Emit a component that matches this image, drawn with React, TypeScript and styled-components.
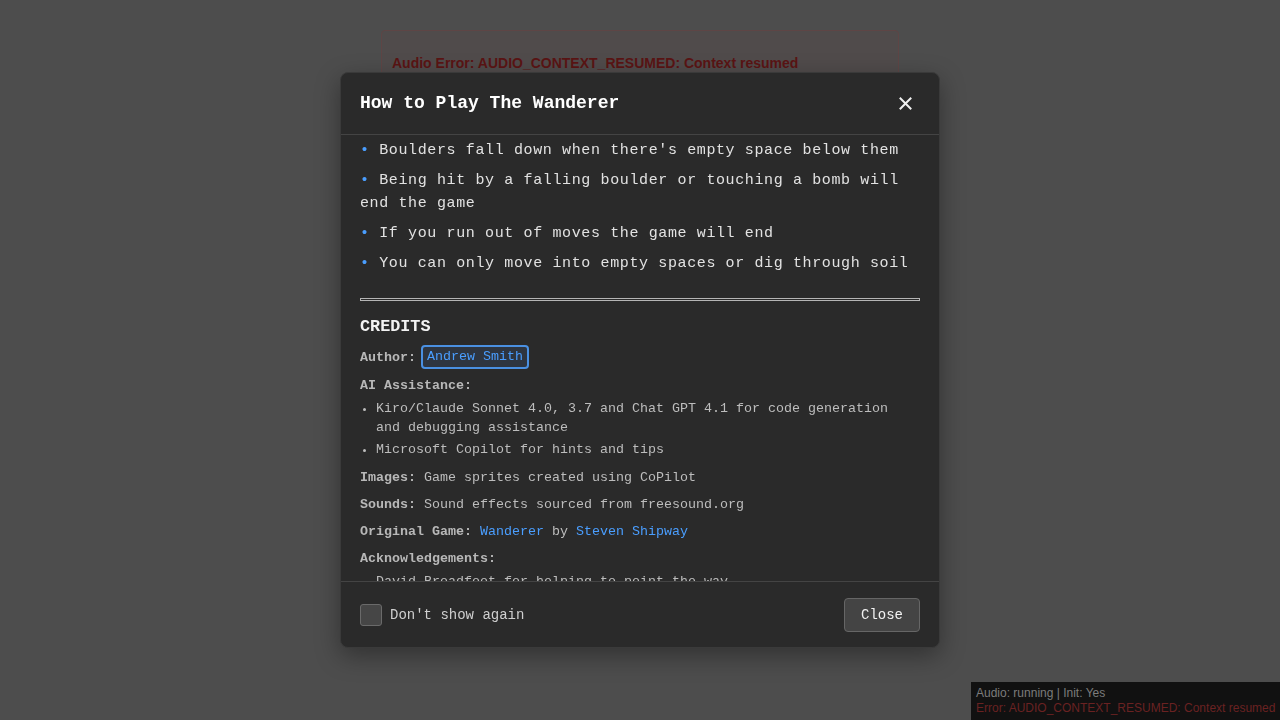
import React from "react";
import styled, { createGlobalStyle } from "styled-components";

const Global = createGlobalStyle`
  html, body { margin: 0; padding: 0; }
  body {
    background: #4d4d4d;
    font-family: "Liberation Sans", Arial, sans-serif;
    width: 1280px;
    height: 720px;
    overflow: hidden;
  }
`;

const Page = styled.div`
  display: flex;
  flex-direction: column;
  align-items: center;
  padding-top: 30px;
`;

const ErrorBox = styled.div`
  width: 518px;
  height: 90px;
  box-sizing: border-box;
  background: #504b4b;
  border: 1px solid #5e4545;
  border-radius: 4px;
  padding: 23px 10px 10px;
  color: #5a1414;
  font-weight: bold;
  font-size: 14px;
  line-height: 18px;
`;

const Overlay = styled.div`
  position: fixed;
  inset: 0;
  display: flex;
  align-items: center;
  justify-content: center;
`;

const Modal = styled.div`
  width: 600px;
  height: 576px;
  box-sizing: border-box;
  background: #2a2a2a;
  border: 1px solid #3a3a3a;
  border-radius: 8px;
  display: flex;
  flex-direction: column;
  font-family: "Liberation Mono", "Courier New", monospace;
  box-shadow: 0 8px 24px rgba(0, 0, 0, 0.35);
  overflow: hidden;
`;

const Header = styled.div`
  display: flex;
  align-items: center;
  justify-content: space-between;
  padding: 0 19px;
  border-bottom: 1px solid #444;
  height: 62px;
  box-sizing: border-box;
  flex-shrink: 0;
`;

const Title = styled.h2`
  margin: 0;
  font-size: 18px;
  font-weight: bold;
  color: #fff;
  line-height: 21px;
`;

const CloseX = styled.button`
  background: none;
  border: none;
  padding: 0;
  width: 30px;
  height: 30px;
  display: flex;
  align-items: center;
  justify-content: center;
  cursor: pointer;
`;

const Body = styled.div`
  flex: 1;
  overflow: hidden;
  padding: 4px 19px 0;
  min-height: 0;
`;

const RuleList = styled.ul`
  list-style: none;
  margin: 0 0 23px;
  padding: 0;
`;

const RuleItem = styled.li`
  font-size: 15px;
  line-height: 23px;
  color: #e2e2e2;
  margin-bottom: 7px;
  letter-spacing: 0.62px;
`;

const Dot = styled.span`
  color: #4a9eff;
`;

const Divider = styled.div`
  height: 1px;
  border: 1px solid #b5b5b5;
  background: #2a2a2a;
  margin: 0 0 16px;
`;

const CreditsTitle = styled.h3`
  margin: 0 0 8px;
  font-size: 16.8px;
  line-height: 20px;
  font-weight: bold;
  color: #f2f2f2;
`;

const AuthorRow = styled.div`
  display: flex;
  align-items: center;
  gap: 5px;
  height: 24px;
  margin-bottom: 7px;
  font-size: 13.33px;
`;

const Line = styled.p<{ $gap?: number }>`
  margin: 0 0 ${(p) => p.$gap ?? 8}px;
  font-size: 13.33px;
  line-height: 19px;
  color: #bdbdbd;
`;

const Label = styled.strong`
  font-weight: bold;
  color: #b8b8b8;
`;

const Link = styled.a`
  color: #4a9eff;
  text-decoration: none;
`;

const FocusLink = styled.a`
  color: #4a9eff;
  text-decoration: none;
  border: 2px solid #4a90e2;
  border-radius: 4px;
  background: #2e3540;
  padding: 2px 4px;
  line-height: 16px;
`;

const CreditList = styled.ul`
  margin: 4px 0 9px;
  padding: 0 12px 0 16px;
  color: #bdbdbd;
  font-size: 13.33px;
  line-height: 19px;
`;

const CreditItem = styled.li`
  margin-bottom: 3px;
  &::marker {
    font-size: 12px;
  }
`;

const Footer = styled.div`
  display: flex;
  align-items: center;
  justify-content: space-between;
  padding: 16px 19px 15px;
  border-top: 1px solid #444;
  flex-shrink: 0;
`;

const CheckLabel = styled.label`
  display: flex;
  align-items: center;
  gap: 8px;
  font-size: 14px;
  color: #cfcfcf;
  cursor: pointer;
`;

const Box = styled.span`
  width: 20px;
  height: 20px;
  background: #464646;
  border: 1px solid #6a6a6a;
  border-radius: 3px;
  display: inline-block;
`;

const CloseButton = styled.button`
  font-family: "Liberation Mono", "Courier New", monospace;
  font-size: 14px;
  line-height: 16px;
  color: #f2f2f2;
  background: #444;
  border: 1px solid #666;
  border-radius: 4px;
  padding: 8px 16px;
  cursor: pointer;
`;

const Debug = styled.div`
  position: fixed;
  right: 0;
  bottom: 0;
  width: 309px;
  height: 38px;
  box-sizing: border-box;
  background: #111;
  padding: 4px 5px;
  font-family: "Liberation Sans", Arial, sans-serif;
  font-size: 12px;
  line-height: 15px;
  color: #7c7c7c;
  white-space: nowrap;
  overflow: hidden;
`;

const DebugErr = styled.div`
  color: #6a2222;
`;

export default function App() {
  return (
    <>
      <Global />
      <Page>
        <ErrorBox>Audio Error: AUDIO_CONTEXT_RESUMED: Context resumed</ErrorBox>
      </Page>
      <Overlay>
        <Modal>
          <Header>
            <Title>How to Play The Wanderer</Title>
            <CloseX aria-label="Close">
              <svg width="13" height="13" viewBox="0 0 13 13">
                <path d="M1.5 1.5 L11.5 11.5 M11.5 1.5 L1.5 11.5" stroke="#f0f0f0" strokeWidth="2" strokeLinecap="square" />
              </svg>
            </CloseX>
          </Header>
          <Body>
            <RuleList>
              <RuleItem><Dot>•</Dot> Boulders fall down when there's empty space below them</RuleItem>
              <RuleItem><Dot>•</Dot> Being hit by a falling boulder or touching a bomb will end the game</RuleItem>
              <RuleItem><Dot>•</Dot> If you run out of moves the game will end</RuleItem>
              <RuleItem><Dot>•</Dot> You can only move into empty spaces or dig through soil</RuleItem>
            </RuleList>
            <Divider />
            <CreditsTitle>CREDITS</CreditsTitle>
            <AuthorRow>
              <Label>Author:</Label>
              <FocusLink href="#">Andrew Smith</FocusLink>
            </AuthorRow>
            <Line $gap={0}>
              <Label>AI Assistance:</Label>
            </Line>
            <CreditList>
              <CreditItem>Kiro/Claude Sonnet 4.0, 3.7 and Chat GPT 4.1 for code generation and debugging assistance</CreditItem>
              <CreditItem>Microsoft Copilot for hints and tips</CreditItem>
            </CreditList>
            <Line>
              <Label>Images:</Label> Game sprites created using CoPilot
            </Line>
            <Line>
              <Label>Sounds:</Label> Sound effects sourced from freesound.org
            </Line>
            <Line>
              <Label>Original Game:</Label> <Link href="#">Wanderer</Link> by <Link href="#">Steven Shipway</Link>
            </Line>
            <Line $gap={0}>
              <Label>Acknowledgements:</Label>
            </Line>
            <CreditList>
              <CreditItem>David Broadfoot for helping to point the way</CreditItem>
            </CreditList>
          </Body>
          <Footer>
            <CheckLabel>
              <Box />
              Don't show again
            </CheckLabel>
            <CloseButton>Close</CloseButton>
          </Footer>
        </Modal>
      </Overlay>
      <Debug>
        <div>Audio: running | Init: Yes</div>
        <DebugErr>Error: AUDIO_CONTEXT_RESUMED: Context resumed</DebugErr>
      </Debug>
    </>
  );
}
